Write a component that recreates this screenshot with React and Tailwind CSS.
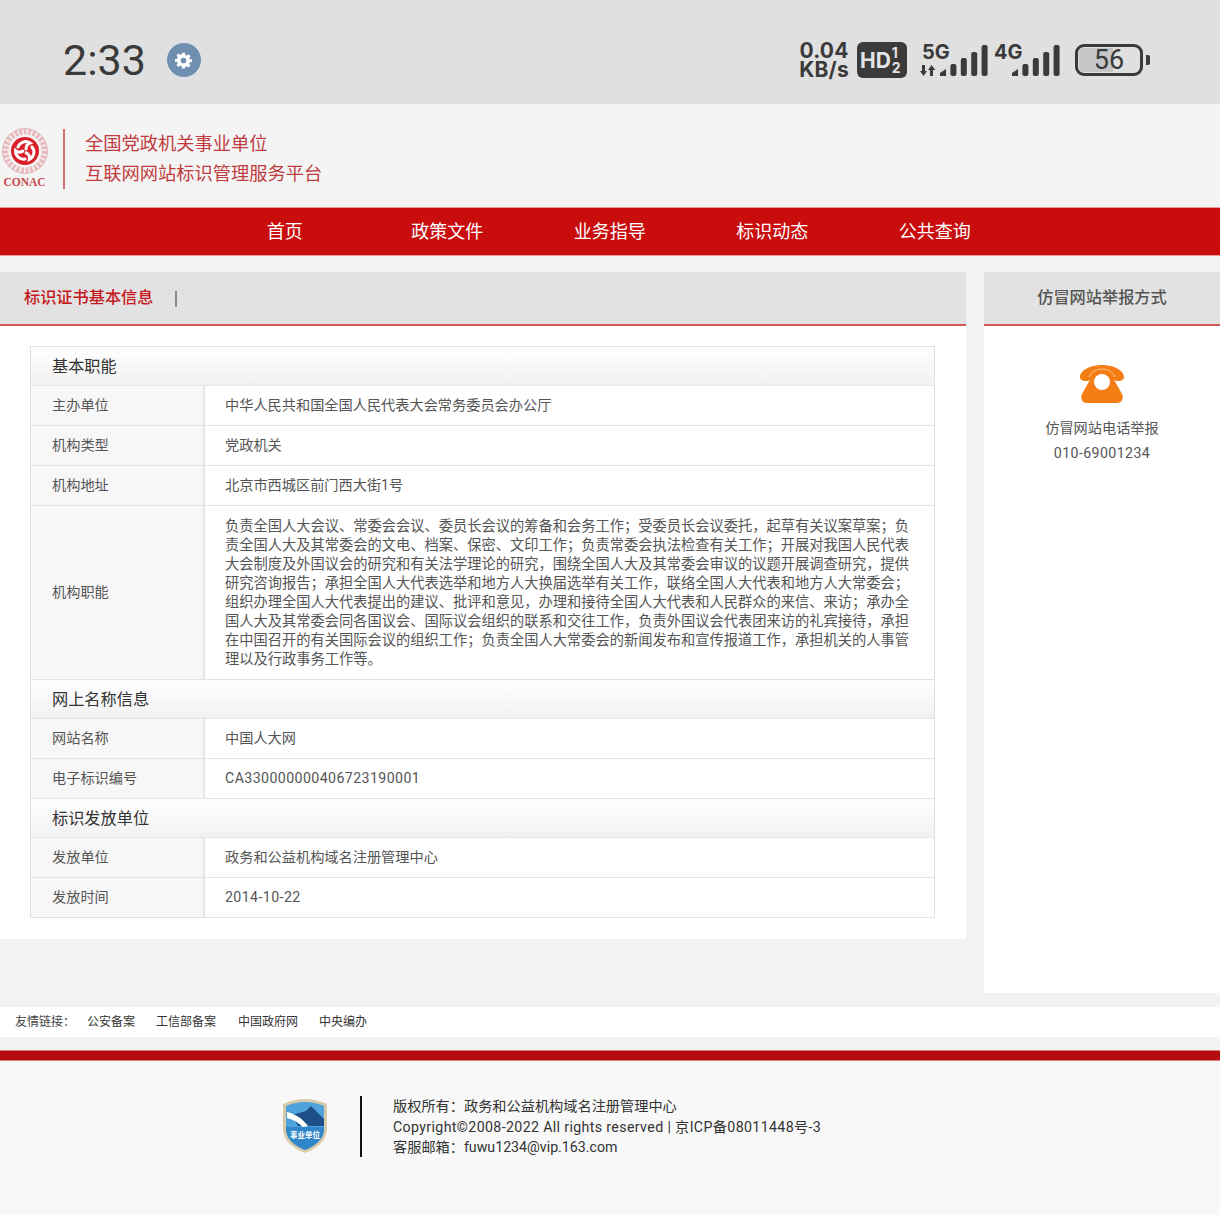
import React from "react";

const cjk = "font-['Roboto','Noto_Sans_CJK_SC',sans-serif]";
const latin = "tracking-[0.4px]";

const nav = ["首页", "政策文件", "业务指导", "标识动态", "公共查询"];

// full-width punctuation, as on the page
const C = "\uFF0C";
const S = "\uFF1B";
const K = "\uFF1A";

const duties = [
  `负责全国人大会议、常委会会议、委员长会议的筹备和会务工作${S}受委员长会议委托${C}起草有关议案草案${S}负`,
  `责全国人大及其常委会的文电、档案、保密、文印工作${S}负责常委会执法检查有关工作${S}开展对我国人民代表`,
  `大会制度及外国议会的研究和有关法学理论的研究${C}围绕全国人大及其常委会审议的议题开展调查研究${C}提供`,
  `研究咨询报告${S}承担全国人大代表选举和地方人大换届选举有关工作${C}联络全国人大代表和地方人大常委会${S}`,
  `组织办理全国人大代表提出的建议、批评和意见${C}办理和接待全国人大代表和人民群众的来信、来访${S}承办全`,
  `国人大及其常委会同各国议会、国际议会组织的联系和交往工作${C}负责外国议会代表团来访的礼宾接待${C}承担`,
  `在中国召开的有关国际会议的组织工作${S}负责全国人大常委会的新闻发布和宣传报道工作${C}承担机关的人事管`,
  "理以及行政事务工作等。",
];

const Bars = () => (
  <svg width="48" height="31" viewBox="0 0 48 31" className="block">
    <path d="M0 31v-3l6-4v7z" fill="#3a3a3a" />
    {[12, 18, 24, 31].map((h, i) => (
      <rect key={h} x={10.4 * (i + 1)} y={31 - h} width="6" height={h} rx="2" fill="#3a3a3a" />
    ))}
  </svg>
);

const StatusBar = () => (
  <div className="h-[104px] bg-[#e0e0e0] flex items-center justify-between pl-[63px] pr-[70px] pt-[16px] text-[#3a3a3a]">
    <div className="flex items-center gap-[21px]">
      <span className="text-[43px] leading-none font-['Roboto',sans-serif]">2:33</span>
      <span className="w-[34px] h-[34px] rounded-full bg-[#6f8fb0] flex items-center justify-center">
        <svg width="17" height="17" viewBox="0 0 24 24">
          <path
            fill="#fff"
            fillRule="evenodd"
            d="M10 1h4l.6 3.2 1.9.8 2.7-1.8 2.8 2.800-1.800 2.700.8 1.900L24 10v4l-3.200.6-.8 1.900 1.800 2.700-2.800 2.800-2.700-1.800-1.900.8L14 23.200h-4l-.6-3.200-1.900-.8-2.700 1.800L2 18.200l1.800-2.700-.8-1.900L0 14v-4l3.200-.6.8-1.900L2.200 4.800 5 2l2.700 1.800 1.900-.8L10 1zm2 7a4 4 0 1 0 0 8 4 4 0 0 0 0-8z"
          />
        </svg>
      </span>
    </div>
    <div className="flex items-center font-['Inter',sans-serif]">
      <div className="w-[50px] flex flex-col items-center text-[21px] leading-[19px] font-bold">
        <span className="tracking-[0.2px]">0.04</span>
        <span className="tracking-[0.2px]">KB/s</span>
      </div>
      <div className="ml-[8px] w-[50px] h-[36px] rounded-[6px] bg-[#3a3a3a] text-[#e4e4e4] font-bold flex items-center pl-[3px]">
        <span className="text-[21px] leading-none">HD</span>
        <span className="flex flex-col text-[14px] leading-[15px] ml-[1px]">
          <span>1</span>
          <span>2</span>
        </span>
      </div>
      <div className="ml-[12px] w-[69px] h-[36px] relative">
        <span className="text-[20px] leading-[20px] font-bold absolute left-[3px] top-0">5G</span>
        <svg width="17" height="11" viewBox="0 0 17 11" className="absolute left-0 bottom-[2px]">
          <path d="M3 0h3v6h2l-3.500 5L1 6h2zM11 11h3V5h2.500L12.500 0 9 5h2z" fill="#3a3a3a" />
        </svg>
        <div className="absolute left-[21px] bottom-[2px]">
          <Bars />
        </div>
      </div>
      <div className="ml-[6px] w-[66px] h-[36px] relative">
        <span className="text-[20px] leading-[20px] font-bold absolute left-0 top-0">4G</span>
        <div className="absolute left-[18px] bottom-[2px]">
          <Bars />
        </div>
      </div>
      <div className="ml-[15px] w-[68px] h-[32px] rounded-[9px] border-[3px] border-[#3a3a3a] relative flex items-center justify-center font-['Roboto',sans-serif]">
        <div className="absolute left-[1px] top-[1px] bottom-[1px] w-[34px] bg-[#c6c6c6] rounded-l-[5px]" />
        <span className="relative text-[27px] leading-none">56</span>
      </div>
      <div className="ml-[3px] w-[4px] h-[10px] rounded-r-[2px] bg-[#3a3a3a]" />
    </div>
  </div>
);

const ConacLogo = () => (
  <div className="w-[49px] flex flex-col items-center">
    <svg width="46" height="46" viewBox="0 0 46 46">
      <circle cx="23" cy="23" r="19.500" fill="none" stroke="#e8bcbf" strokeWidth="6" strokeDasharray="3 1.500" />
      <circle cx="23" cy="23" r="22.400" fill="none" stroke="#e3b5b8" strokeWidth="1" />
      <circle cx="23" cy="23" r="14" fill="#d9202a" />
      {[0, 120, 240].map((a) => (
        <path
          key={a}
          d="M16 19a8 8 0 0 1 12-4c-3 1-4 3-4 6"
          transform={`rotate(${a} 23 23)`}
          fill="none"
          stroke="#fff"
          strokeWidth="3"
          strokeLinecap="round"
        />
      ))}
    </svg>
    <span className="text-[11.5px] leading-[13px] font-bold text-[#c8494d] font-['Liberation_Serif',serif] mt-[2px]">
      CONAC
    </span>
  </div>
);

const Header = () => (
  <div className={`h-[103px] bg-[#f4f4f4] flex items-center pt-[6px] ${cjk}`}>
    <ConacLogo />
    <div className="ml-[14px] w-[2px] h-[60px] bg-[#cf6f70]" />
    <div className="ml-[20px] text-[18.25px] leading-[30px] text-[#bf3b3e]">
      <div>全国党政机关事业单位</div>
      <div>互联网网站标识管理服务平台</div>
    </div>
  </div>
);

const Nav = () => (
  <div
    className={`h-[49px] bg-[#c90c0c] border-y border-[#e79a9a] pl-[203.5px] flex items-center text-white text-[18px] ${cjk}`}
  >
    {nav.map((n) => (
      <div key={n} className="w-[162.5px] text-center">
        {n}
      </div>
    ))}
  </div>
);

const SectionHead = ({ children }) => (
  <div className="h-[39px] pl-[21px] pt-[2px] flex items-center text-[16.2px] text-[#333] border-b border-[#e6e6e6] bg-gradient-to-b from-white to-[#f1f1f1]">
    {children}
  </div>
);

const Row = ({ label, h = "h-[40px]", children }) => (
  <div className={`flex ${h} border-b border-[#e3e3e3] text-[14.2px] text-[#555]`}>
    <div className="w-[174px] shrink-0 pl-[21px] bg-[#f7f7f7] border-r-2 border-[#e6e6e6] flex items-center">{label}</div>
    <div className="flex-1 pl-[20px] flex items-center">{children}</div>
  </div>
);

const InfoTable = () => (
  <div className="border border-b-0 border-[#e0e0e0] w-[905px]">
    <SectionHead>基本职能</SectionHead>
    <Row label="主办单位">中华人民共和国全国人民代表大会常务委员会办公厅</Row>
    <Row label="机构类型">党政机关</Row>
    <Row label="机构地址">北京市西城区前门西大街1号</Row>
    <Row label="机构职能" h="h-[174px]">
      <div className="leading-[19px] whitespace-nowrap text-[14.25px]">
        {duties.map((d) => (
          <div key={d}>{d}</div>
        ))}
      </div>
    </Row>
    <SectionHead>网上名称信息</SectionHead>
    <Row label="网站名称">中国人大网</Row>
    <Row label="电子标识编号">
      <span className={latin}>CA330000000406723190001</span>
    </Row>
    <SectionHead>标识发放单位</SectionHead>
    <Row label="发放单位">政务和公益机构域名注册管理中心</Row>
    <Row label="发放时间">
      <span className={latin}>2014-10-22</span>
    </Row>
  </div>
);

const Phone = () => (
  <svg width="44" height="38" viewBox="0 0 44 38">
    <path
      d="M22 0C33 0 44 5 44 12c0 3-3 4-6 4-2 0-4-.6-5-2-2-3-6-5-11-5s-9 2-11 5c-1 1.400-3 2-5 2-3 0-6-1-6-4C0 5 11 0 22 0z"
      fill="#f47d14"
    />
    <path d="M22 6c5 0 9 2 11 7l9 16c2 4 0 9-5 9H7c-5 0-7-5-5-9l9-16c2-5 6-7 11-7z" fill="#f47d14" />
    <path d="M9 12C12 6 17 4 22 4s10 2 13 8" fill="none" stroke="#fbc58f" strokeWidth="1" />
    <circle cx="22" cy="17" r="8" fill="#fff" />
  </svg>
);

const Shield = () => (
  <svg width="46" height="56" viewBox="0 0 46 56">
    <path d="M23 1C31 1 38 3 45 6v25c0 12-11 20-22 24C12 51 1 43 1 31V6C8 3 15 1 23 1z" fill="#d8c9a8" />
    <path d="M23 4C30 4 37 6 42 8v23c0 10-9 17-19 21C13 48 4 41 4 31V8C9 6 16 4 23 4z" fill="#4fa3dc" />
    <path d="M10 17l14-4 5-5 13 13v7H16z" fill="#1d4f86" />
    <path d="M5 14c8 2 15 6 21 14l-5 1C16 24 10 21 5 20z" fill="#fff" />
    <path d="M4 29h38v2c0 10-9 17-19 21C13 48 4 41 4 31z" fill="#2f86c8" />
    <text x="23" y="40" textAnchor="middle" fontSize="7.500" fontWeight="700" fill="#fff" fontFamily="Noto Sans CJK SC">
      事业单位
    </text>
  </svg>
);

const Main = () => (
  <div className={`h-[751px] bg-[#f2f2f2] pt-[16px] flex gap-[18px] items-start ${cjk}`}>
    <div className="w-[966px] bg-white">
      <div className="h-[54px] bg-[#e2e2e2] border-b-2 border-[#cf5a5a] flex items-center pl-[24px] pt-[1px]">
        <span className="text-[16.2px] font-medium text-[#c5161c]">标识证书基本信息</span>
        <span className="ml-[21px] w-[2px] h-[16px] bg-[#8a8a8a]" />
      </div>
      <div className="pt-[20px] pb-[21px] pl-[30px]">
        <InfoTable />
      </div>
    </div>
    <div className="w-[236px] h-[721px] bg-white">
      <div className="h-[54px] bg-[#e2e2e2] border-b-2 border-[#cf5a5a] flex items-center justify-center pt-[1px] text-[16.2px] font-medium text-[#555]">
        仿冒网站举报方式
      </div>
      <div className="flex flex-col items-center pt-[39px] text-[14.2px] leading-[24px] text-[#555]">
        <Phone />
        <div className="mt-[13px]">仿冒网站电话举报</div>
        <div className={`${latin} mt-[1px]`}>010-69001234</div>
      </div>
    </div>
  </div>
);

const Footer = () => (
  <div className={cjk}>
    <div className="h-[30px] bg-white flex items-center pl-[15px] text-[12px] text-[#333]">
      <span className="w-[72px] text-[#444]">{`友情链接${K}`}</span>
      <span className="w-[69px]">公安备案</span>
      <span className="w-[82px]">工信部备案</span>
      <span className="w-[81px]">中国政府网</span>
      <span>中央编办</span>
    </div>
    <div className="h-[13px] bg-[#f2f2f2]" />
    <div className="h-[11px] bg-[#b70c0f] border-y border-[#d97f7f]" />
    <div className="h-[154px] bg-[#f8f8f8] flex items-start pl-[282px] pt-[35px]">
      <div className="mt-[2px]">
        <Shield />
      </div>
      <div className="ml-[32px] w-[2px] h-[61px] bg-[#111]" />
      <div className="ml-[31px] text-[14.2px] leading-[20.5px] text-[#333]">
        <div>{`版权所有${K}政务和公益机构域名注册管理中心`}</div>
        <div className="tracking-[0.36px]">Copyright©2008-2022 All rights reserved | 京ICP备08011448号-3</div>
        <div>{`客服邮箱${K}fuwu1234@vip.163.com`}</div>
      </div>
    </div>
  </div>
);

export default function App() {
  return (
    <div className="w-[1220px] h-[1215px] overflow-hidden">
      <StatusBar />
      <Header />
      <Nav />
      <Main />
      <Footer />
    </div>
  );
}
